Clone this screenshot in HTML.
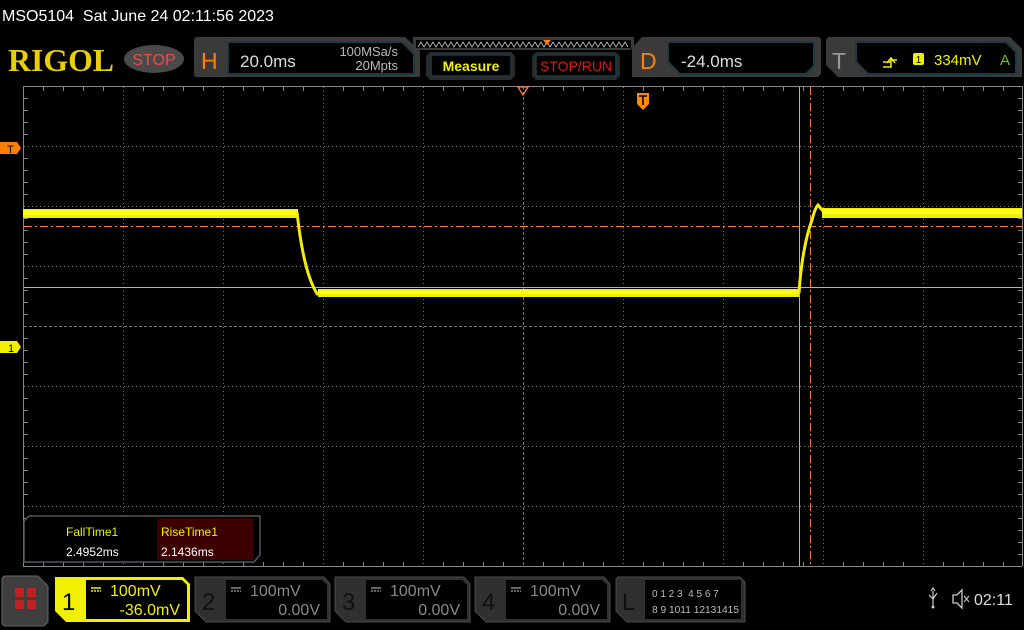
<!DOCTYPE html>
<html><head><meta charset="utf-8"><style>
html,body{margin:0;padding:0;background:#000;width:1024px;height:630px;overflow:hidden}
svg{display:block;font-family:"Liberation Sans",sans-serif}
</style></head><body>
<svg width="1024" height="630" viewBox="0 0 1024 630" xmlns="http://www.w3.org/2000/svg">
<rect width="1024" height="630" fill="#000"/>
<text x="2" y="21" fill="#fff" font-size="16" xml:space="preserve" style="white-space:pre">MSO5104  Sat June 24 02:11:56 2023</text>
<!-- RIGOL -->
<text x="8" y="71" fill="#e8d000" style="font-family:'Liberation Serif',serif;font-weight:bold" font-size="32" textLength="106" lengthAdjust="spacingAndGlyphs">RIGOL</text>
<ellipse cx="154" cy="59" rx="30" ry="14" fill="#4a4a4a"/>
<text x="154" y="65" fill="#f04848" font-size="16" text-anchor="middle">STOP</text>
<!-- H panel -->
<path d="M197 37 H405 L420 51 V77 H197 Q194 77 194 74 V40 Q194 37 197 37Z" fill="#3a3a3a"/>
<path d="M228 42 H402 L414 54 V74 H228 Z" fill="#000" stroke="#1c3a44" stroke-width="2"/>
<text x="201" y="69" fill="#ff7f00" font-size="23">H</text>
<text x="240" y="67" fill="#ddd" font-size="17">20.0ms</text>
<text x="398" y="56" fill="#bbb" font-size="13" text-anchor="end">100MSa/s</text>
<text x="398" y="70" fill="#bbb" font-size="13" text-anchor="end">20Mpts</text>
<!-- wave strip -->
<path d="M413 37 H634 V46 L630 50 H417 L413 46Z" fill="#3a3a3a"/>
<rect x="416" y="40" width="215" height="8" fill="#000"/>
<polyline points="418,47 421,42 424,47 427,42 430,47 433,42 436,47 439,42 442,47 445,42 448,47 451,42 454,47 457,42 460,47 463,42 466,47 469,42 472,47 475,42 478,47 481,42 484,47 487,42 490,47 493,42 496,47 499,42 502,47 505,42 508,47 511,42 514,47 517,42 520,47 523,42 526,47 529,42 532,47 535,42 538,47 541,42 544,47 547,42 550,47 553,42 556,47 559,42 562,47 565,42 568,47 571,42 574,47 577,42 580,47 583,42 586,47 589,42 592,47 595,42 598,47 601,42 604,47 607,42 610,47 613,42 616,47 619,42 622,47 625,42 628,47" fill="none" stroke="#ccc" stroke-width="0.8"/>
<path d="M543 40 L551 40 L547 45Z" fill="#ff7f00"/>
<!-- Measure -->
<path d="M430 52 H511 L515 56 V76 L511 80 H430 L426 76 V56Z" fill="#2a2a2a"/>
<rect x="431" y="55" width="80" height="21" rx="2" fill="#000" stroke="#1c3a44" stroke-width="1.5"/>
<text x="471" y="71" fill="#f0f000" font-size="14" font-weight="bold" text-anchor="middle">Measure</text>
<path d="M536 52 H616 L620 56 V76 L616 80 H536 L532 76 V56Z" fill="#2a2a2a"/>
<rect x="536" y="55" width="80" height="21" rx="2" fill="#000" stroke="#1c3a44" stroke-width="1.5"/>
<text x="576" y="71" fill="#ee1010" font-size="14" text-anchor="middle">STOP/RUN</text>
<!-- D panel -->
<path d="M642 37 H818 Q821 37 821 40 V74 L818 77 H632 V48Z" fill="#3a3a3a"/>
<path d="M668 42 H814 V66 L806 74 H680 L668 62Z" fill="#000" stroke="#1c3a44" stroke-width="2"/>
<text x="640" y="69" fill="#ff7f00" font-size="23">D</text>
<text x="681" y="67" fill="#ddd" font-size="17">-24.0ms</text>
<!-- T panel -->
<path d="M828 37 H1010 L1022 49 V77 H838 L826 65 V40Z" fill="#3a3a3a"/>
<path d="M856 42 H1006 L1016 52 V74 H868 L856 62Z" fill="#000" stroke="#1c3a44" stroke-width="2"/>
<text x="832" y="69" fill="#999" font-size="23">T</text>
<path d="M883 67 H891 V60 H897 M887 63 L891 58 L895 63 M883 62 H891" fill="none" stroke="#f0f000" stroke-width="1.5"/>
<rect x="913" y="53" width="11" height="12" rx="2" fill="#f0f000"/>
<text x="918.5" y="63" fill="#000" font-size="10" text-anchor="middle">1</text>
<text x="934" y="65" fill="#f0f000" font-size="15">334mV</text>
<text x="1000" y="65" fill="#70c020" font-size="15">A</text>

<!-- GRID -->
<g stroke="#888" stroke-width="1">
<line x1="23" y1="86.5" x2="1022" y2="86.5"/>
<line x1="23" y1="566.5" x2="1022" y2="566.5"/>
<line x1="23.5" y1="86" x2="23.5" y2="566"/>
<line x1="1022.5" y1="86" x2="1022.5" y2="566"/>
</g>
<g stroke="#777" stroke-width="1" stroke-dasharray="1,3">
<line x1="123.5" y1="87" x2="123.5" y2="566"/><line x1="223.5" y1="87" x2="223.5" y2="566"/>
<line x1="323.5" y1="87" x2="323.5" y2="566"/><line x1="423.5" y1="87" x2="423.5" y2="566"/>
<line x1="623.5" y1="87" x2="623.5" y2="566"/><line x1="723.5" y1="87" x2="723.5" y2="566"/>
<line x1="823.5" y1="87" x2="823.5" y2="566"/><line x1="923.5" y1="87" x2="923.5" y2="566"/>
<line x1="24" y1="146.5" x2="1022" y2="146.5"/><line x1="24" y1="206.5" x2="1022" y2="206.5"/>
<line x1="24" y1="266.5" x2="1022" y2="266.5"/><line x1="24" y1="386.5" x2="1022" y2="386.5"/>
<line x1="24" y1="446.5" x2="1022" y2="446.5"/><line x1="24" y1="506.5" x2="1022" y2="506.5"/>
</g>
<g stroke="#777" stroke-width="1" stroke-dasharray="3,2">
<line x1="523.5" y1="87" x2="523.5" y2="566"/>
<line x1="24" y1="326.5" x2="1022" y2="326.5"/>
</g>
<g stroke="#888" stroke-width="1">
<path d="M43.5 87v4M63.5 87v4M83.5 87v4M103.5 87v4M143.5 87v4M163.5 87v4M183.5 87v4M203.5 87v4M243.5 87v4M263.5 87v4M283.5 87v4M303.5 87v4M343.5 87v4M363.5 87v4M383.5 87v4M403.5 87v4M443.5 87v4M463.5 87v4M483.5 87v4M503.5 87v4M543.5 87v4M563.5 87v4M583.5 87v4M603.5 87v4M643.5 87v4M663.5 87v4M683.5 87v4M703.5 87v4M743.5 87v4M763.5 87v4M783.5 87v4M803.5 87v4M843.5 87v4M863.5 87v4M883.5 87v4M903.5 87v4M943.5 87v4M963.5 87v4M983.5 87v4M1003.5 87v4"/>
<path d="M43.5 566v-4M63.5 566v-4M83.5 566v-4M103.5 566v-4M143.5 566v-4M163.5 566v-4M183.5 566v-4M203.5 566v-4M243.5 566v-4M263.5 566v-4M283.5 566v-4M303.5 566v-4M343.5 566v-4M363.5 566v-4M383.5 566v-4M403.5 566v-4M443.5 566v-4M463.5 566v-4M483.5 566v-4M503.5 566v-4M543.5 566v-4M563.5 566v-4M583.5 566v-4M603.5 566v-4M643.5 566v-4M663.5 566v-4M683.5 566v-4M703.5 566v-4M743.5 566v-4M763.5 566v-4M783.5 566v-4M803.5 566v-4M843.5 566v-4M863.5 566v-4M883.5 566v-4M903.5 566v-4M943.5 566v-4M963.5 566v-4M983.5 566v-4M1003.5 566v-4"/>
<path d="M24 98.5h4M24 110.5h4M24 122.5h4M24 134.5h4M24 158.5h4M24 170.5h4M24 182.5h4M24 194.5h4M24 218.5h4M24 230.5h4M24 242.5h4M24 254.5h4M24 278.5h4M24 290.5h4M24 302.5h4M24 314.5h4M24 338.5h4M24 350.5h4M24 362.5h4M24 374.5h4M24 398.5h4M24 410.5h4M24 422.5h4M24 434.5h4M24 458.5h4M24 470.5h4M24 482.5h4M24 494.5h4M24 518.5h4M24 530.5h4M24 542.5h4M24 554.5h4"/>
<path d="M1022 98.5h-4M1022 110.5h-4M1022 122.5h-4M1022 134.5h-4M1022 158.5h-4M1022 170.5h-4M1022 182.5h-4M1022 194.5h-4M1022 218.5h-4M1022 230.5h-4M1022 242.5h-4M1022 254.5h-4M1022 278.5h-4M1022 290.5h-4M1022 302.5h-4M1022 314.5h-4M1022 338.5h-4M1022 350.5h-4M1022 362.5h-4M1022 374.5h-4M1022 398.5h-4M1022 410.5h-4M1022 422.5h-4M1022 434.5h-4M1022 458.5h-4M1022 470.5h-4M1022 482.5h-4M1022 494.5h-4M1022 518.5h-4M1022 530.5h-4M1022 542.5h-4M1022 554.5h-4"/>
</g>
<!-- cursors -->
<line x1="24" y1="287.5" x2="1022" y2="287.5" stroke="#f0a070" stroke-width="1"/>
<line x1="799.5" y1="87" x2="799.5" y2="566" stroke="#f0a070" stroke-width="1"/>
<line x1="24" y1="226.5" x2="1022" y2="226.5" stroke="#ff8030" stroke-width="1" stroke-dasharray="8,3,2,3"/>
<line x1="810.5" y1="87" x2="810.5" y2="566" stroke="#ff8030" stroke-width="1" stroke-dasharray="8,3,2,3"/>
<!-- waveform -->
<rect x="23" y="209" width="275" height="9" fill="#f2ee00"/>
<rect x="23" y="210" width="275" height="5" fill="#fcfc20"/>
<rect x="318" y="289" width="481" height="8" fill="#f2ee00"/>
<rect x="318" y="290" width="481" height="4" fill="#fcfc20"/>
<rect x="822" y="208" width="200" height="10" fill="#f2ee00"/>
<rect x="822" y="209" width="200" height="5" fill="#fcfc20"/>
<path d="M297 212 C300 240 306 278 318 295" fill="none" stroke="#f5f000" stroke-width="3"/>
<path d="M799 293 C801 262 806 236 812 220 C814 212 816 207 818 205 L823 211" fill="none" stroke="#f5f000" stroke-width="3"/>
<!-- markers -->
<path d="M0 142 H17 L21 148 L17 154 H0Z" fill="#ff7f00"/>
<text x="7" y="153" fill="#000" font-size="11">T</text>
<path d="M0 341 H17 L21 347 L17 353 H0Z" fill="#f0f000"/>
<text x="8" y="352" fill="#000" font-size="11">1</text>
<path d="M518 87 H528 L523 95Z" fill="none" stroke="#ff8030" stroke-width="1.3"/>
<path d="M637 93 H649 V104 L643 110 L637 104Z" fill="#ff8a00"/>
<path d="M639 96 H647 M643 96 V105" stroke="#000" stroke-width="1.5"/>
<!-- measurement box -->
<path d="M29 516 H260 V555 L254 562 H24 V521Z" fill="#000" stroke="#4a5a5e" stroke-width="1.5"/>
<rect x="157" y="518" width="96" height="42" fill="#3c0000"/>
<text x="66" y="536" fill="#f0f000" font-size="12">FallTime1</text>
<text x="66" y="556" fill="#fff" font-size="12">2.4952ms</text>
<text x="161" y="536" fill="#f0f000" font-size="12">RiseTime1</text>
<text x="161" y="556" fill="#fff" font-size="12">2.1436ms</text>
<!-- bottom bar -->
<path d="M6 576 H38 L48 586 V622 L44 626 H6 Q2 626 2 622 V580 Q2 576 6 576Z" fill="#3e3e3e" stroke="#666" stroke-width="1"/>
<rect x="15" y="588" width="9" height="9" fill="#c02020"/><rect x="27" y="588" width="9" height="9" fill="#c02020"/>
<rect x="15" y="600" width="9" height="9" fill="#c02020"/><rect x="27" y="600" width="9" height="9" fill="#c02020"/>
<!-- ch1 -->
<path d="M55 577 H183 L190 584 V622 H66 L55 611Z" fill="#f0f000"/>
<path d="M86 580 H182 L187 585 V619 H86Z" fill="#000"/>
<text x="62" y="610" fill="#000" font-size="24">1</text>
<path d="M91 588h10" stroke="#f0f000" stroke-width="1.5"/><path d="M91 591h10" stroke="#f0f000" stroke-width="1.5" stroke-dasharray="2,1"/>
<text x="110" y="596" fill="#f0f000" font-size="16">100mV</text>
<text x="180" y="615" fill="#f0f000" font-size="16" text-anchor="end">-36.0mV</text>
<!-- ch2-4 -->
<g>
<path d="M195 577 H324 L330 584 V622 H206 L195 611Z" fill="#303030" stroke="#4a4a4a"/>
<path d="M226 580 H322 L327 585 V619 H226Z" fill="#000"/>
<text x="202" y="610" fill="#111" font-size="24">2</text>
<path d="M231 588h10" stroke="#888" stroke-width="1.5"/><path d="M231 591h10" stroke="#888" stroke-width="1.5" stroke-dasharray="2,1"/>
<text x="250" y="596" fill="#888" font-size="16">100mV</text>
<text x="320" y="615" fill="#888" font-size="16" text-anchor="end">0.00V</text>
</g>
<g transform="translate(140,0)">
<path d="M195 577 H324 L330 584 V622 H206 L195 611Z" fill="#303030" stroke="#4a4a4a"/>
<path d="M226 580 H322 L327 585 V619 H226Z" fill="#000"/>
<text x="202" y="610" fill="#111" font-size="24">3</text>
<path d="M231 588h10" stroke="#888" stroke-width="1.5"/><path d="M231 591h10" stroke="#888" stroke-width="1.5" stroke-dasharray="2,1"/>
<text x="250" y="596" fill="#888" font-size="16">100mV</text>
<text x="320" y="615" fill="#888" font-size="16" text-anchor="end">0.00V</text>
</g>
<g transform="translate(280,0)">
<path d="M195 577 H324 L330 584 V622 H206 L195 611Z" fill="#303030" stroke="#4a4a4a"/>
<path d="M226 580 H322 L327 585 V619 H226Z" fill="#000"/>
<text x="202" y="610" fill="#111" font-size="24">4</text>
<path d="M231 588h10" stroke="#888" stroke-width="1.5"/><path d="M231 591h10" stroke="#888" stroke-width="1.5" stroke-dasharray="2,1"/>
<text x="250" y="596" fill="#888" font-size="16">100mV</text>
<text x="320" y="615" fill="#888" font-size="16" text-anchor="end">0.00V</text>
</g>
<!-- L -->
<path d="M618 577 H740 L745 582 V622 H627 L616 611 V579Z" fill="#303030" stroke="#4a4a4a"/>
<path d="M645 580 H741 V619 H645Z" fill="#000"/>
<text x="622" y="610" fill="#111" font-size="24">L</text>
<text x="652" y="597" fill="#bbb" font-size="10" xml:space="preserve" style="white-space:pre">0 1 2 3  4 5 6 7</text>
<text x="652" y="613" fill="#bbb" font-size="10" textLength="87" lengthAdjust="spacingAndGlyphs">8 9 1011 12131415</text>
<!-- status -->
<path d="M933 591 V606 M929 595 L933 599 L937 593 M931 591 L933 588 L935 591" stroke="#ccc" stroke-width="1.2" fill="none"/>
<circle cx="933" cy="607" r="1.5" fill="#ccc"/>
<path d="M953 595 H957 L962 590 V608 L957 603 H953Z" fill="none" stroke="#ccc" stroke-width="1.3"/>
<path d="M964 596 L969 602 M969 596 L964 602" stroke="#ccc" stroke-width="1"/>
<text x="974" y="605" fill="#ddd" font-size="16">02:11</text>
</svg>
</body></html>
